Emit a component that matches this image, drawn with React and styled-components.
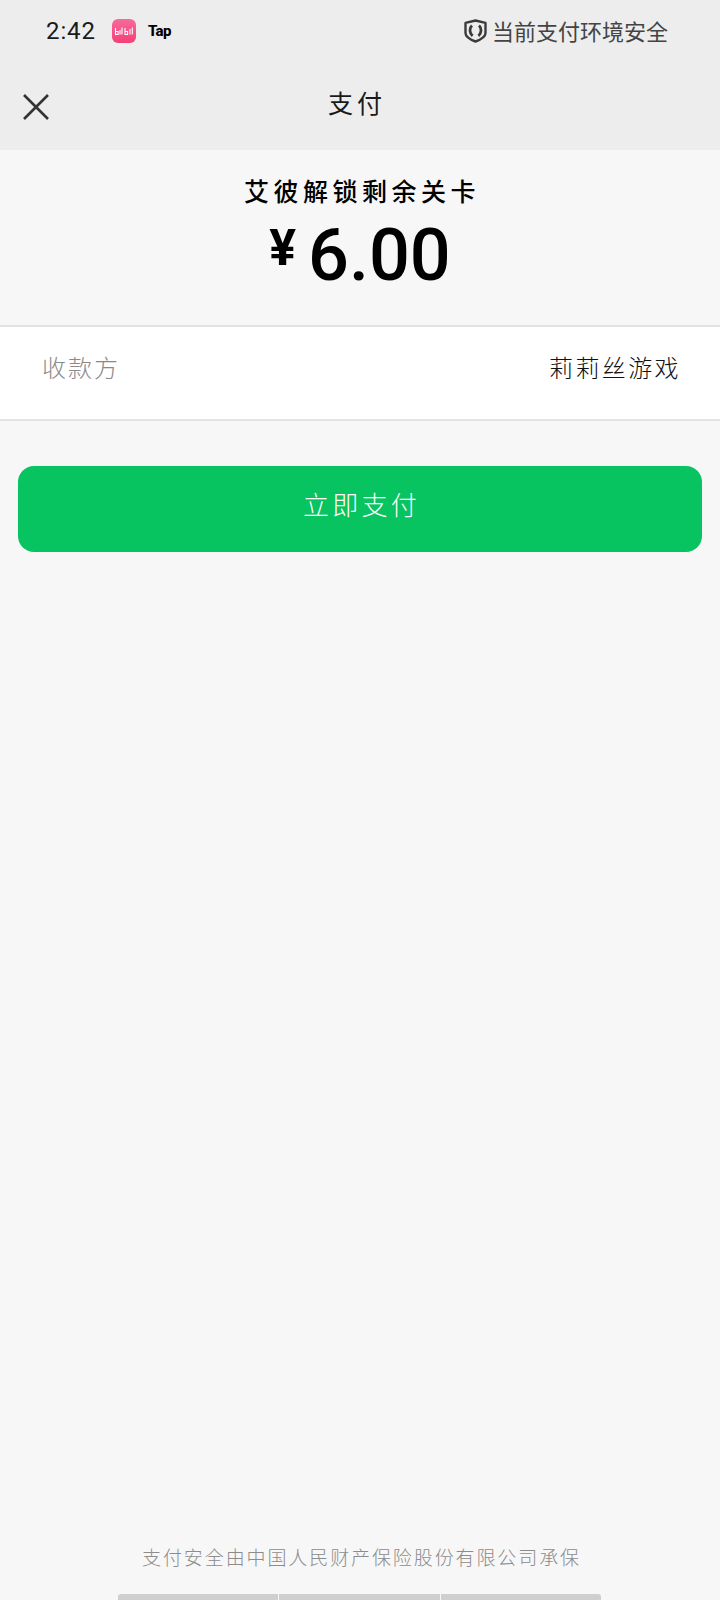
import React from "react";
import styled, { createGlobalStyle } from "styled-components";

const Global = createGlobalStyle`
  html, body { margin: 0; padding: 0; background: #f7f7f7; }
  * { box-sizing: border-box; }
`;
const cjk = `"Noto Sans CJK SC", "Noto Sans", sans-serif`;

const Page = styled.div`
  width: 720px; height: 1600px; display: flex; flex-direction: column;
  background: #f7f7f7; font-family: ${cjk}; overflow: hidden;
`;
const Header = styled.header`
  height: 150px; background: #ededed; flex: none; display: flex; flex-direction: column;
`;
const StatusBar = styled.div`
  height: 62px; display: flex; align-items: center; padding: 0 52px 0 46px;
`;
const Clock = styled.span`
  font: 24px/1 Roboto, sans-serif; color: #1a1a1a; letter-spacing: 0.9px; width: 66px;
`;
const AppIcon = styled.svg`
  width: 24px; height: 24px; display: block;
`;
const TapLabel = styled.span`
  font: 800 15px/1 Roboto, sans-serif; letter-spacing: -0.6px; color: #000; margin-left: 12px;
`;
const Secure = styled.div`
  margin-left: auto; display: flex; align-items: center; gap: 5px; color: #444; font-size: 22px; line-height: 1;
  padding-bottom: 1px;
`;
const SecureText = styled.span`
  position: relative; top: -1px;
`;
const NavBar = styled.div`
  flex: 1; display: flex; align-items: center; justify-content: center; position: relative; padding: 0 10px 8px 0;
`;
const CloseButton = styled.button`
  position: absolute; left: 22px; top: 31px; width: 28px; height: 28px; padding: 0; border: 0; background: none;
`;
const Title = styled.h1`
  margin: 0; font: 400 25px/1 ${cjk}; letter-spacing: 4px; color: #1a1a1a; padding-left: 4px;
`;
const Summary = styled.section`
  height: 177px; flex: none; border-bottom: 2px solid #e3e3e3; display: flex; flex-direction: column; align-items: center; padding-top: 27px;
`;
const Product = styled.div`
  font: 500 25px/1.1 ${cjk}; letter-spacing: 4.5px; padding-left: 4px; color: #000;
`;
const Amount = styled.div`
  display: flex; align-items: baseline; margin-top: 15px; color: #000; font-family: Roboto, sans-serif; line-height: 1;
`;
const Currency = styled.span`
  font-size: 50px; font-weight: 700; margin-right: 12px; position: relative; top: -15px;
`;
const Value = styled.span`
  font-size: 72px; font-weight: 500;
`;
const PayeeRow = styled.div`
  height: 94px; flex: none; background: #fff; border-bottom: 2px solid #e3e3e3; display: flex; align-items: center; justify-content: space-between; padding: 0 39px 13px 42px;
`;
const PayeeLabel = styled.span`
  font-size: 24px; letter-spacing: 2px; color: #8a8a8a; font-weight: 300;
`;
const PayeeName = styled.span`
  font-size: 24px; letter-spacing: 2.4px; color: #111; font-weight: 300;
`;
const PayButton = styled.button`
  flex: none; margin: 45px 18px 0; height: 86px; border: 0; border-radius: 16px; background: #07c360; color: #fff;
  font: 300 26px/1 ${cjk}; letter-spacing: 3.3px; padding: 0 0 10px 3px;
`;
const Spacer = styled.div` flex: 1; `;
const Notice = styled.div`
  text-align: center; font-size: 19px; line-height: 1; font-weight: 300; color: #8c8c8c; letter-spacing: 1.9px; padding-left: 3px;
`;
const HomeBar = styled.div`
  margin: 28px 0 0 118px; width: 483px; height: 6px; display: flex; gap: 1px; flex: none;
`;
const HomeSegment = styled.div`
  flex: 1; background: #cfcfcf;
  &:first-child { border-radius: 3px 0 0 0; }
  &:last-child { border-radius: 0 3px 0 0; }
`;

export default function App() {
  return (
    <Page>
      <Global />
      <Header>
        <StatusBar>
          <Clock>2:42</Clock>
          <AppIcon viewBox="0 0 24 24">
            <defs>
              <linearGradient id="appPink" x1="0" y1="0" x2="0" y2="1">
                <stop offset="0" stopColor="#f76a9a" />
                <stop offset="1" stopColor="#f53f78" />
              </linearGradient>
            </defs>
            <rect width="24" height="24" rx="6" fill="url(#appPink)" />
            <path d="M3.5 9v6.5h2.6v-3H3.5M8 11v4.5M10 8.5v7M13 9v6.5h2.6v-3H13M18 10v5.5M20.3 8.5v7" fill="none" stroke="#fff" strokeWidth="1.1" />
          </AppIcon>
          <TapLabel>Tap</TapLabel>
          <Secure>
            <svg width="23" height="24" viewBox="0 0 23 24">
              <path d="M11.5 1.5 21.5 3.8V14c0 3.6-4.6 6.5-10 8.5-5.4-2-10-4.9-10-8.5V3.8z" fill="#ededed" stroke="#3b3b3b" strokeWidth="2.4" strokeLinejoin="round" />
              <path d="M8 6.5C5.2 9 5.2 14 8.6 16.8M15 6.5c2.8 2.5 2.8 7.5-.6 10.3" fill="none" stroke="#3b3b3b" strokeWidth="2.8" />
            </svg>
            <SecureText>当前支付环境安全</SecureText>
          </Secure>
        </StatusBar>
        <NavBar>
          <CloseButton aria-label="关闭">
            <svg width="28" height="28" viewBox="0 0 28 28">
              <path d="M2 2l24 24M26 2 2 26" stroke="#333" strokeWidth="2.6" fill="none" />
            </svg>
          </CloseButton>
          <Title>支付</Title>
        </NavBar>
      </Header>
      <Summary>
        <Product>艾彼解锁剩余关卡</Product>
        <Amount>
          <Currency>¥</Currency>
          <Value>6.00</Value>
        </Amount>
      </Summary>
      <PayeeRow>
        <PayeeLabel>收款方</PayeeLabel>
        <PayeeName>莉莉丝游戏</PayeeName>
      </PayeeRow>
      <PayButton>立即支付</PayButton>
      <Spacer />
      <Notice>支付安全由中国人民财产保险股份有限公司承保</Notice>
      <HomeBar>
        <HomeSegment /><HomeSegment /><HomeSegment />
      </HomeBar>
    </Page>
  );
}
